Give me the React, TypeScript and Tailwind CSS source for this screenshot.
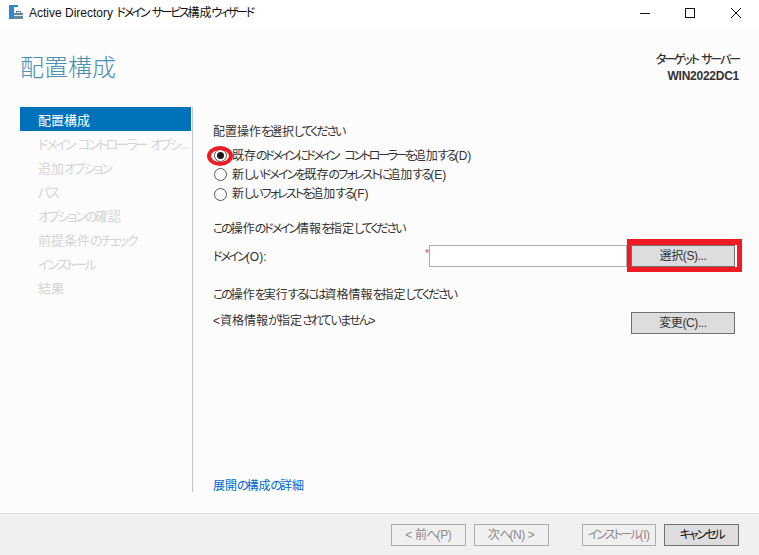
function T({ children, k = "tracking-[-2.1px]" }: { children: string; k?: string }) {
  const parts = children.split(/([\u3040-\u30ff]+)/);
  return (
    <>
      {parts.map((p, i) =>
        i % 2 === 1 ? (
          <span key={i} className={k}>{p}</span>
        ) : (
          <span key={i}>{p}</span>
        ),
      )}
    </>
  );
}

function Radio({ checked, label }: { checked?: boolean; label: string }) {
  return (
    <div className={`flex items-center ${checked ? "h-[19px]" : "h-[19.5px]"}`}>
      <span className="flex h-[13px] w-[13px] items-center justify-center rounded-full border border-[#555555] bg-white">
        {checked && <span className="h-[7px] w-[7px] rounded-full bg-[#1a1a1a]" />}
      </span>
      <span className="ml-[5px] whitespace-nowrap [word-spacing:3px]">
        <T k={checked ? "tracking-[-2.35px]" : "tracking-[-1.9px]"}>{label}</T>
      </span>
    </div>
  );
}

function Btn({ label, disabled, strong, className = "" }: { label: string; disabled?: boolean; strong?: boolean; className?: string }) {
  return (
    <div
      className={`flex h-[22px] items-center justify-center whitespace-nowrap border tracking-[-0.4px] ${
        disabled ? "border-[#adadad] bg-[#f0f0f0] text-[#8a8a8a]" : "border-[#707070] bg-[#dddddd]"
      } ${strong ? "text-[#111111]" : ""} ${className}`}
    >
      <T>{label}</T>
    </div>
  );
}

const steps = ["ドメイン コントローラー オプシ...", "追加オプション", "パス", "オプションの確認", "前提条件のチェック", "インストール", "結果"];

export default function App() {
  return (
    <div className="flex h-[555px] w-[759px] flex-col overflow-hidden bg-[#fcfcfc] text-[12px] leading-none text-[#333333] [font-family:'Liberation_Sans','Noto_Sans_CJK_JP',sans-serif] [font-feature-settings:'palt']">
      <div className="flex h-[28px] shrink-0 items-center bg-white pb-[3px]">
        <svg width="15" height="15" viewBox="0 0 15 15" className="ml-[8px]">
          <rect x="1" y="0" width="5" height="14" fill="#2b8ad0" />
          <rect x="1" y="0" width="9" height="2" fill="#2b8ad0" />
          <rect x="6" y="8" width="9" height="6" fill="#6b8699" />
          <rect x="8.5" y="6.5" width="4" height="2" fill="none" stroke="#6b8699" />
          <rect x="6" y="10" width="9" height="1" fill="#dfe6ea" />
        </svg>
        <span className="ml-[6px] whitespace-nowrap text-[#111111]">
          <T k="tracking-[-2.3px]">Active Directory ドメイン サービス構成ウィザード</T>
        </span>
        <div className="ml-auto flex items-center">
          <svg width="10" height="10" viewBox="0 0 10 10" className="mr-[35px]"><path d="M0 5.5H10" stroke="#111" /></svg>
          <svg width="10" height="10" viewBox="0 0 10 10" className="mr-[36px]"><rect x="0.5" y="0.5" width="9" height="9" fill="none" stroke="#111" /></svg>
          <svg width="10" height="10" viewBox="0 0 10 10" className="mr-[18px]"><path d="M0 0L10 10M10 0L0 10" stroke="#111" /></svg>
        </div>
      </div>

      <div className="flex h-[79px] shrink-0 items-start justify-between pl-[20px] pr-[20px]">
        <div className="mt-[26px] text-[24px] font-light leading-[28px] text-[#4d8fb0]">配置構成</div>
        <div className="mt-[24px] text-right font-medium leading-[16px] text-[#333333]">
          <div><T>ターゲット サーバー</T></div>
          <div className="font-bold tracking-[-0.25px]">WIN2022DC1</div>
        </div>
      </div>

      <div className="flex min-h-0 flex-1">
        <div className="ml-[20px] h-[385px] w-[173px] shrink-0 border-r border-[#c4c4c4] text-[13px]">
          <div className="flex h-[24px] w-[171px] items-center bg-[#0072bc] pl-[18px] pt-[2px] text-white">配置構成</div>
          {steps.map((s) => (
            <div key={s} className="flex h-[24px] items-center whitespace-pre pl-[18px] pt-[2px] text-[#d4d4d4]"><span><T>{s}</T></span></div>
          ))}
        </div>

        <div className="relative flex h-[385px] flex-1 flex-col pl-[20px] pr-[24px]">
          <div className="mt-[19px]"><T>配置操作を選択してください</T></div>
          <div className="mt-[8px] pl-[1px]">
            <Radio checked label="既存のドメインにドメイン コントローラーを追加する(D)" />
            <Radio label="新しいドメインを既存のフォレストに追加する(E)" />
            <Radio label="新しいフォレストを追加する(F)" />
          </div>
          <div className="mt-[19px]"><T>この操作のドメイン情報を指定してください</T></div>
          <div className="mt-[10px] flex h-[22px] items-center">
            <span className="w-[216px] pt-[2px]"><T>ドメイン(O):</T></span>
            <span className="relative flex-1">
              <span className="absolute -left-[4px] top-[3px] text-[11px] text-[#e5484d]">*</span>
              <div className="h-[22px] border border-[#abadb3] bg-white" />
            </span>
            <Btn label="選択(S)..." className="ml-[4px] w-[104px]" />
          </div>
          <div className="mt-[22px]"><T>この操作を実行するには資格情報を指定してください</T></div>
          <div className="mt-[11px] flex h-[22px] items-center justify-between">
            <span className="pb-[4px]"><T k="tracking-[-1.7px]">&lt;資格情報が指定されていません&gt;</T></span>
            <Btn label="変更(C)..." className="w-[104px]" />
          </div>
          <div className="mt-auto text-[#0066cc]"><T>展開の構成の詳細</T></div>

          <div className="absolute left-[14px] top-[39px] h-[20px] w-[26px] rounded-[50%] border-[4px] border-[#ed1c24]" />
          <div className="absolute left-[434px] top-[132px] h-[33px] w-[115px] border-b-[5px] border-l-[4px] border-r-[5px] border-t-[6px] border-[#ed1c24]" />
        </div>
      </div>

      <div className="flex h-[42px] shrink-0 items-center border-t border-[#dcdcdc] bg-[#f0f0f0] pr-[20px]">
        <Btn disabled label="< 前へ(P)" className="ml-[391px] w-[75px]" />
        <Btn disabled label="次へ(N) >" className="ml-[8px] w-[75px]" />
        <Btn disabled label="インストール(I)" className="ml-[33px] w-[75px]" />
        <Btn strong label="キャンセル" className="ml-[8px] w-[75px]" />
      </div>
    </div>
  );
}
